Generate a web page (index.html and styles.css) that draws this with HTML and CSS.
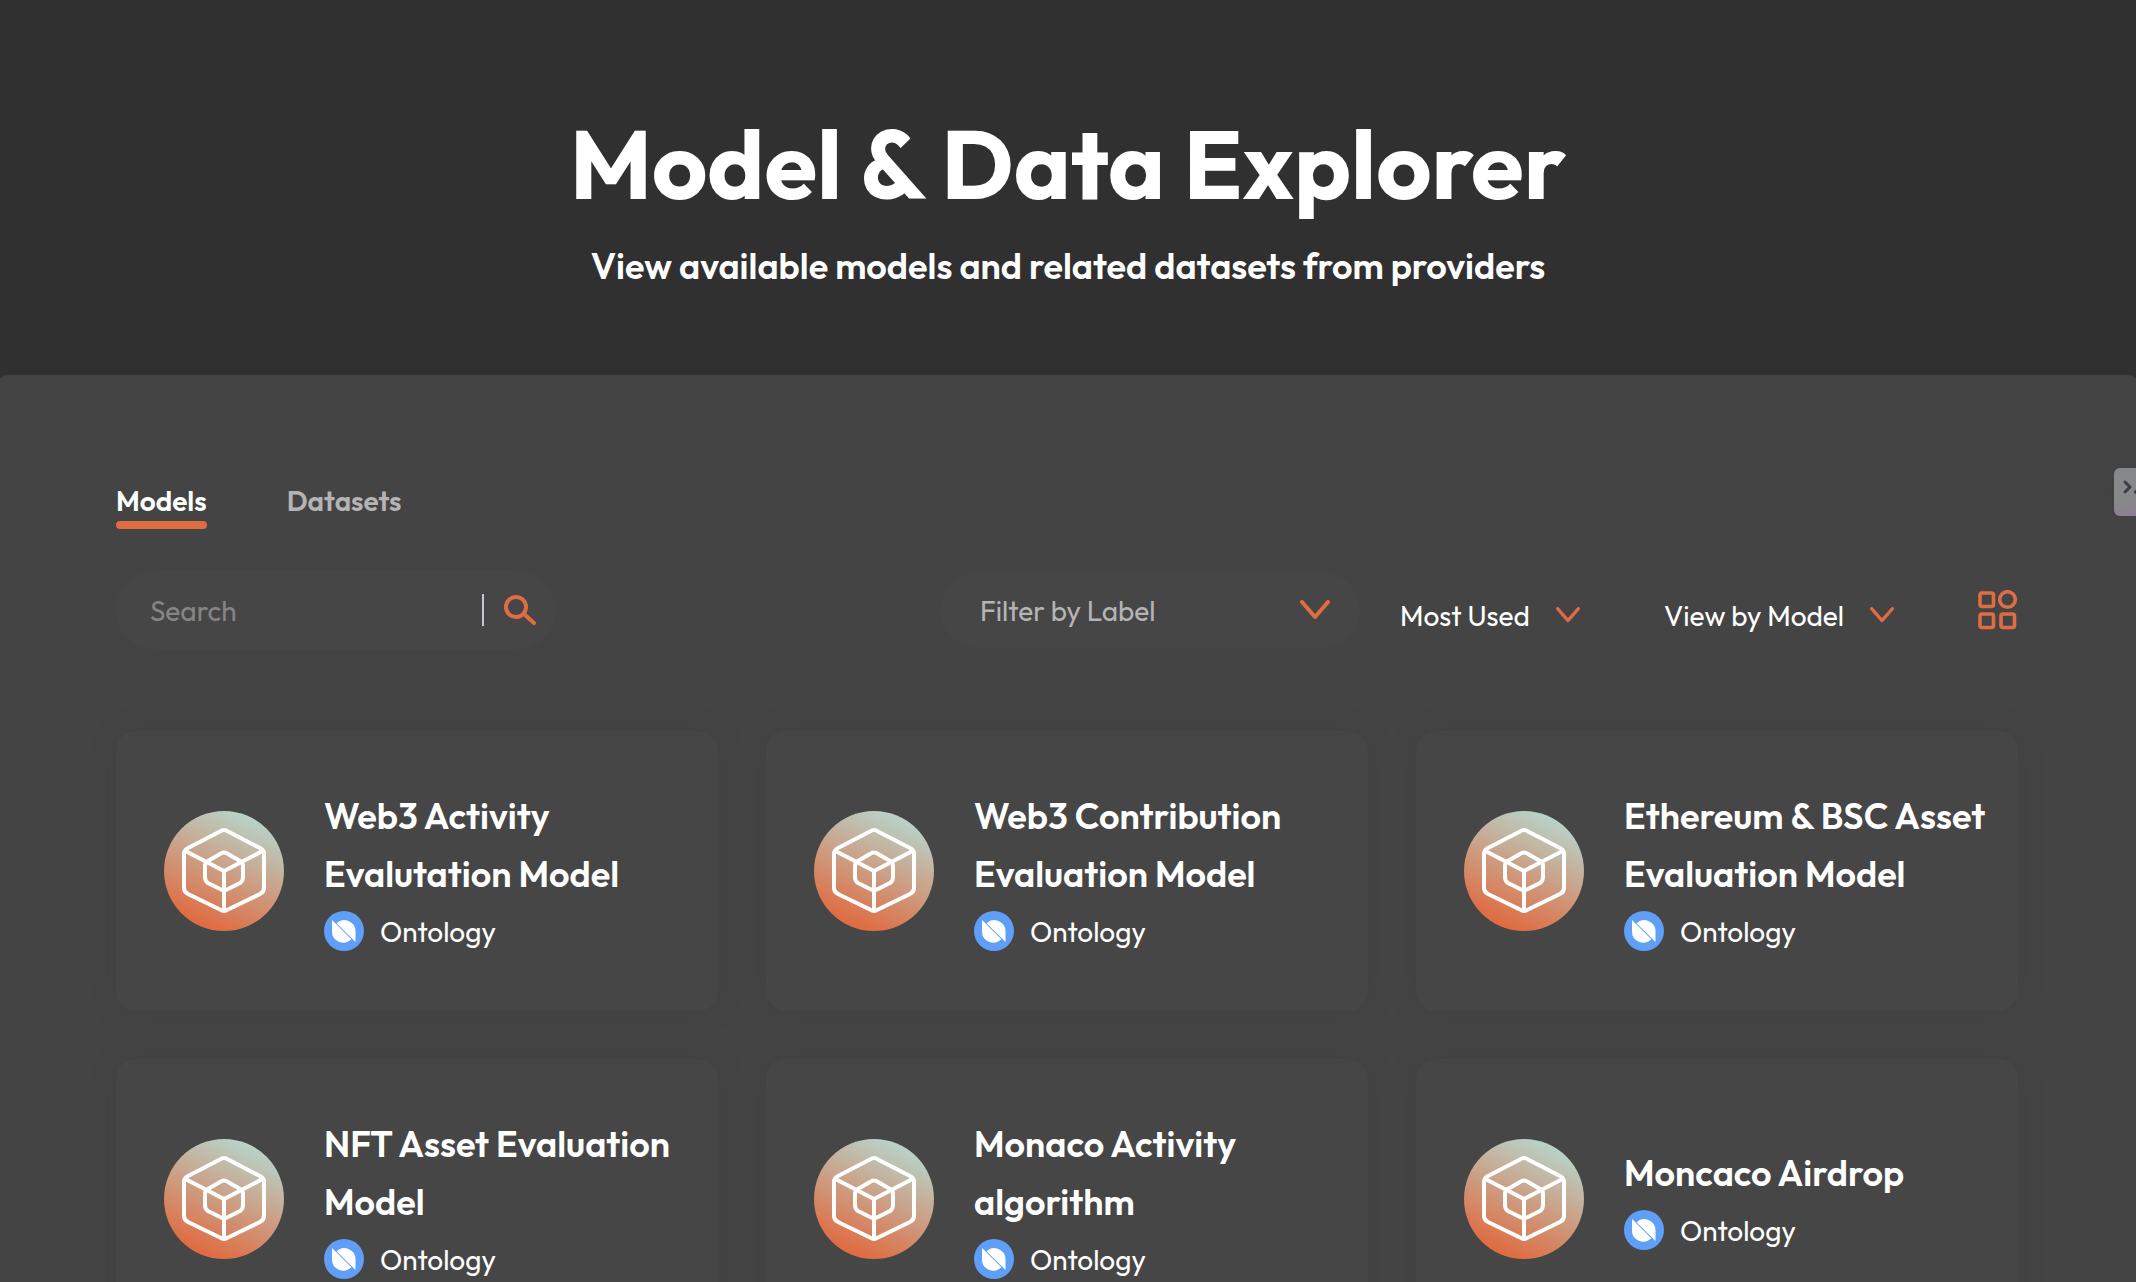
FILE: index.html
```html
<!DOCTYPE html>
<html lang="en">
<head>
<meta charset="utf-8">
<title>Model &amp; Data Explorer</title>
<link rel="stylesheet" href="styles.css">
</head>
<body>
<svg class="defs" aria-hidden="true">
  <defs>
    <linearGradient id="cube-bg" x1="0.74" y1="0.07" x2="0.34" y2="0.94">
      <stop offset="0" stop-color="#b8d2c8"/>
      <stop offset="1" stop-color="#df6d43"/>
    </linearGradient>
  </defs>
  <symbol id="cube" viewBox="0 0 120 120">
    <circle cx="60" cy="60" r="60" fill="url(#cube-bg)"/>
    <g fill="none" stroke="#fff" stroke-width="4" stroke-linejoin="round">
      <path d="M56 20.500Q60 17.500 64 20.500L96 37Q100 39 100 43V77Q100 81 96 83L64 98.500Q60 101.500 56 98.500L24 83Q20 81 20 77V43Q20 39 24 37Z"/>
      <path d="M20.500 39.500L60 60L99.500 39.500M60 60V101"/>
      <path d="M43 50.500L56 43Q60 40 64 43L77 50.500Q79 52 79 55V66Q79 70 76 72L64 78Q60 80 56 78L44 72Q41 70 41 66V55Q41 52 43 50.500"/>
    </g>
  </symbol>
  <symbol id="ont" viewBox="0 0 40 40">
    <circle cx="20" cy="20" r="20" fill="#5f9ff8"/>
    <path d="M8 9L27.300 28.300A11.300 11.300 0 0 1 8 20Z" fill="#fff"/>
    <path d="M12.500 12.300A11.300 11.300 0 0 1 31.500 20V31Z" fill="#fff"/>
  </symbol>
  <symbol id="chevron" viewBox="0 0 30 20">
    <path d="M2 2L15 17L28 2" fill="none" stroke="#df6d43" stroke-width="4" stroke-linecap="round" stroke-linejoin="round"/>
  </symbol>
</svg>

<header class="hero">
  <h1>Model &amp; Data Explorer</h1>
  <p>View available models and related datasets from providers</p>
</header>

<main class="panel">
  <nav class="tabs">
    <a class="tab active" href="#models">Models</a>
    <a class="tab" href="#datasets">Datasets</a>
  </nav>

  <div class="toolbar">
    <form class="search">
      <input type="search" placeholder="Search" aria-label="Search">
      <span class="bar"></span>
      <button type="button" aria-label="Submit search">
        <svg width="32" height="30" viewBox="0 0 32 30" fill="none" stroke="#df6d43" stroke-width="4" stroke-linecap="round"><circle cx="12" cy="12" r="10"/><path d="M20 19L30 28"/></svg>
      </button>
    </form>
    <button class="filter" type="button">Filter by Label<svg width="30" height="20"><use href="#chevron"/></svg></button>
    <button class="sort" type="button">Most Used<svg width="24" height="16"><use href="#chevron"/></svg></button>
    <button class="sort view" type="button">View by Model<svg width="24" height="16"><use href="#chevron"/></svg></button>
    <button class="grid-toggle" type="button" aria-label="Grid view">
      <svg width="40" height="40" viewBox="0 0 40 40" fill="none" stroke="#df6d43" stroke-width="3.600"><rect x="2" y="3" width="13.500" height="13.500" rx="2"/><circle cx="29.500" cy="9.500" r="7.800"/><rect x="2" y="24" width="13.500" height="13.500" rx="2"/><rect x="23" y="24" width="13.500" height="13.500" rx="2"/></svg>
    </button>
  </div>

  <section class="cards">
    <article class="card"><svg class="cube"><use href="#cube"/></svg><div><h2>Web3 Activity Evalutation Model</h2><p><svg><use href="#ont"/></svg>Ontology</p></div></article>
    <article class="card"><svg class="cube"><use href="#cube"/></svg><div><h2>Web3 Contribution Evaluation Model</h2><p><svg><use href="#ont"/></svg>Ontology</p></div></article>
    <article class="card"><svg class="cube"><use href="#cube"/></svg><div><h2>Ethereum &amp; BSC Asset Evaluation Model</h2><p><svg><use href="#ont"/></svg>Ontology</p></div></article>
    <article class="card"><svg class="cube"><use href="#cube"/></svg><div><h2>NFT Asset Evaluation Model</h2><p><svg><use href="#ont"/></svg>Ontology</p></div></article>
    <article class="card"><svg class="cube"><use href="#cube"/></svg><div><h2>Monaco Activity algorithm</h2><p><svg><use href="#ont"/></svg>Ontology</p></div></article>
    <article class="card"><svg class="cube"><use href="#cube"/></svg><div><h2>Moncaco Airdrop</h2><p><svg><use href="#ont"/></svg>Ontology</p></div></article>
  </section>
</main>

<button class="dock" type="button" aria-label="Open assistant">
  <svg width="22" height="48" viewBox="0 0 22 48"><path d="M11 14L16 19L11 24" fill="none" stroke="#3c3d46" stroke-width="3" stroke-linecap="round" stroke-linejoin="round"/><circle cx="22" cy="24" r="2" fill="#3c3d46"/></svg>
</button>
</body>
</html>
```
FILE: styles.css
```css
* { box-sizing: border-box; }

html { overflow: hidden; height: 100%; }

body {
  margin: 0;
  height: 100%;
  overflow: hidden;
  background: #303030;
  color: #fff;
  font-family: Outfit, Lato, "Liberation Sans", sans-serif;
  font-size: 28px;
}

h1, h2, p { margin: 0; }
svg { display: block; flex: none; }
.defs { position: absolute; width: 0; height: 0; }

button {
  padding: 0;
  border: 0;
  background: none;
  color: inherit;
  font: inherit;
}

.hero {
  height: 375px;
  padding-top: 104px;
  text-align: center;
}

.hero h1 { font-size: 96px; line-height: 120px; font-weight: 700; }
.hero p { margin-top: 16px; font-size: 36px; line-height: 52px; font-weight: 600; }

.panel {
  margin: 0 -6px;
  padding: 108px 124px 48px 122px;
  border-radius: 16px 16px 0 0;
  background: #444;
}

.tabs {
  display: flex;
  gap: 80px;
  height: 48px;
  border-bottom: 1px solid #464646;
}

.tab {
  line-height: 36px;
  font-weight: 600;
  color: #b4b4b4;
  text-decoration: none;
}

.tab.active { color: #fff; }

.tab.active::after {
  content: "";
  display: block;
  height: 8px;
  margin-top: 2px;
  border-radius: 4px;
  background: #df6d43;
}

.toolbar {
  display: flex;
  align-items: center;
  height: 80px;
  margin-top: 39px;
}

.search {
  display: flex;
  align-items: center;
  width: 440px;
  height: 80px;
  padding: 0 20px 0 34px;
  border-radius: 40px;
  background: #464646;
}

.search input {
  flex: 1;
  min-width: 0;
  padding: 0;
  border: 0;
  outline: 0;
  background: none;
  color: #fff;
  font: inherit;
}

.search input::placeholder { color: #858585; opacity: 1; }
.bar { width: 2px; height: 32px; margin-right: 20px; background: #c5c6d8; }

.filter {
  display: flex;
  align-items: center;
  justify-content: space-between;
  width: 420px;
  height: 76px;
  margin-left: auto;
  padding: 0 30px 0 40px;
  border-radius: 38px;
  background: #464646;
  color: #b4b4b4;
}

.sort {
  display: flex;
  align-items: center;
  justify-content: space-between;
  width: 180px;
  margin: 10px 0 0 40px;
}

.view { width: 230px; margin-left: 84px; }
.grid-toggle { margin-left: 84px; }

.cards {
  display: grid;
  grid-template-columns: repeat(3, 1fr);
  gap: 48px;
  margin-top: 81px;
}

.card {
  display: flex;
  align-items: center;
  gap: 40px;
  height: 280px;
  padding: 0 20px 0 48px;
  border-radius: 20px;
  background: #464646;
  box-shadow: 0 0 20px #414141;
}

.cube { width: 120px; height: 120px; }
.card h2 { font-size: 36px; line-height: 58px; font-weight: 600; }
.card p { display: flex; align-items: center; gap: 16px; height: 52px; padding-top: 4px; }
.card p svg { width: 40px; height: 40px; }

.dock {
  position: fixed;
  top: 468px;
  right: 0;
  width: 22px;
  height: 48px;
  border-radius: 6px 0 0 6px;
  background: linear-gradient(170deg, #87888a 70%, #8b7f93);
  box-shadow: 0 0 16px #414141;
}
```
